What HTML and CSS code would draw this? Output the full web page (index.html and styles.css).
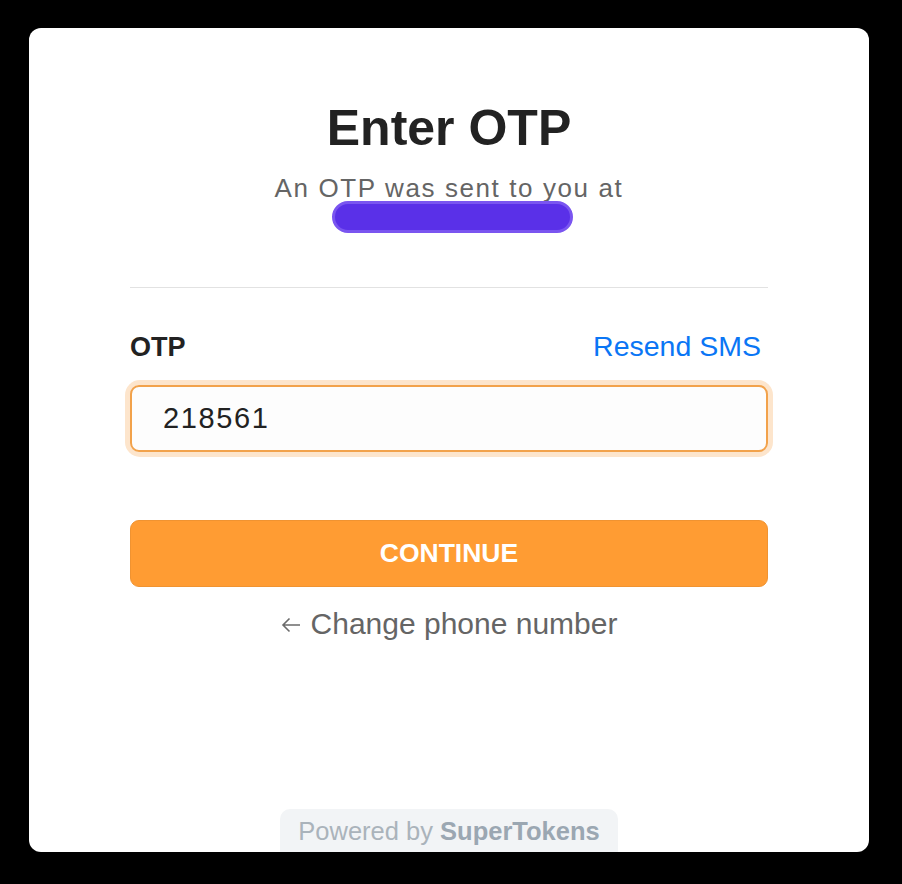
FILE: index.html
```
<!DOCTYPE html>
<html lang="en">
<head>
<meta charset="utf-8">
<title>Enter OTP</title>
<link rel="stylesheet" href="styles.css">
</head>
<body>
<div class="card">
  <div class="content">
    <h1 class="title">Enter OTP</h1>
    <div class="subtitle">An OTP was sent to you at</div>
    <div class="redact"></div>
    <hr class="divider">
    <div class="label-row">
      <span class="label">OTP</span>
      <a class="resend">Resend SMS</a>
    </div>
    <div class="input-wrap">
      <div class="input">218561</div>
    </div>
    <button class="continue">CONTINUE</button>
    <div class="back">
      <svg class="arrow" width="20" height="16" viewBox="0 0 20 16"><path d="M19 8H2M8.5 1.5L2 8l6.5 6.5" fill="none" stroke="#6b6b6b" stroke-width="1.6"/></svg>
      <span>Change phone number</span>
    </div>
  </div>
  <div class="footer">Powered by <b>SuperTokens</b></div>
</div>
</body>
</html>
```
FILE: styles.css
```
html, body {
  margin: 0;
  padding: 0;
  background: #000;
}
body {
  font-family: "Liberation Sans", Arial, sans-serif;
  padding: 28px 33px 32px 29px;
}
.card {
  width: 840px;
  height: 824px;
  background: #fff;
  border-radius: 12px;
  overflow: hidden;
  display: flex;
  flex-direction: column;
  align-items: center;
}
.content {
  width: 638px;
  padding-top: 75px;
  display: flex;
  flex-direction: column;
}
.title {
  margin: 0;
  font-size: 50px;
  line-height: 50px;
  font-weight: 700;
  color: #222;
  text-align: center;
}
.subtitle {
  margin-top: 21px;
  font-size: 26px;
  line-height: 29px;
  letter-spacing: 1.6px;
  color: #656565;
  text-align: center;
}
.redact {
  align-self: center;
  width: 235px;
  height: 26px;
  margin-top: -2px;
  margin-left: 6px;
  background: #5a30e8;
  border: 3px solid #7a55f0;
  border-radius: 16px;
}
.divider {
  margin: 54px 0 0;
  border: 0;
  height: 1px;
  background: #e2e2e2;
}
.label-row {
  margin-top: 42px;
  display: flex;
  justify-content: space-between;
  align-items: baseline;
  line-height: 32px;
  padding-right: 7px;
}
.label {
  font-size: 27px;
  font-weight: 700;
  color: #222;
}
.resend {
  font-size: 28.5px;
  color: #0a76f5;
}
.input-wrap {
  margin-top: 22px;
  border-radius: 10px;
  box-shadow: 0 0 0 5px #fde5cc;
}
.input {
  box-sizing: border-box;
  height: 67px;
  border: 2px solid #f2a24b;
  border-radius: 9px;
  background: #fdfdfd;
  padding-left: 31px;
  font-size: 29px;
  line-height: 63px;
  letter-spacing: 1.6px;
  color: #222;
}
.continue {
  margin-top: 68px;
  height: 67px;
  width: 100%;
  background: #ff9c33;
  border: 1.5px solid #f09331;
  border-radius: 9px;
  color: #fff;
  font-family: "Liberation Sans", Arial, sans-serif;
  font-size: 26.5px;
  font-weight: 700;
  padding: 0;
}
.back {
  margin-top: 20px;
  display: flex;
  justify-content: center;
  align-items: center;
  gap: 10px;
  font-size: 30px;
  line-height: 34px;
  color: #656565;
}
.arrow {
  display: block;
  margin-top: 2px;
}
.footer {
  margin-top: auto;
  margin-bottom: -8px;
  width: 338px;
  box-sizing: border-box;
  height: 51px;
  padding-top: 7px;
  background: #f2f4f6;
  border-radius: 10px;
  text-align: center;
  font-size: 25.5px;
  line-height: 30px;
  color: #aab3bb;
}
.footer b {
  color: #9ba7b2;
}
```
